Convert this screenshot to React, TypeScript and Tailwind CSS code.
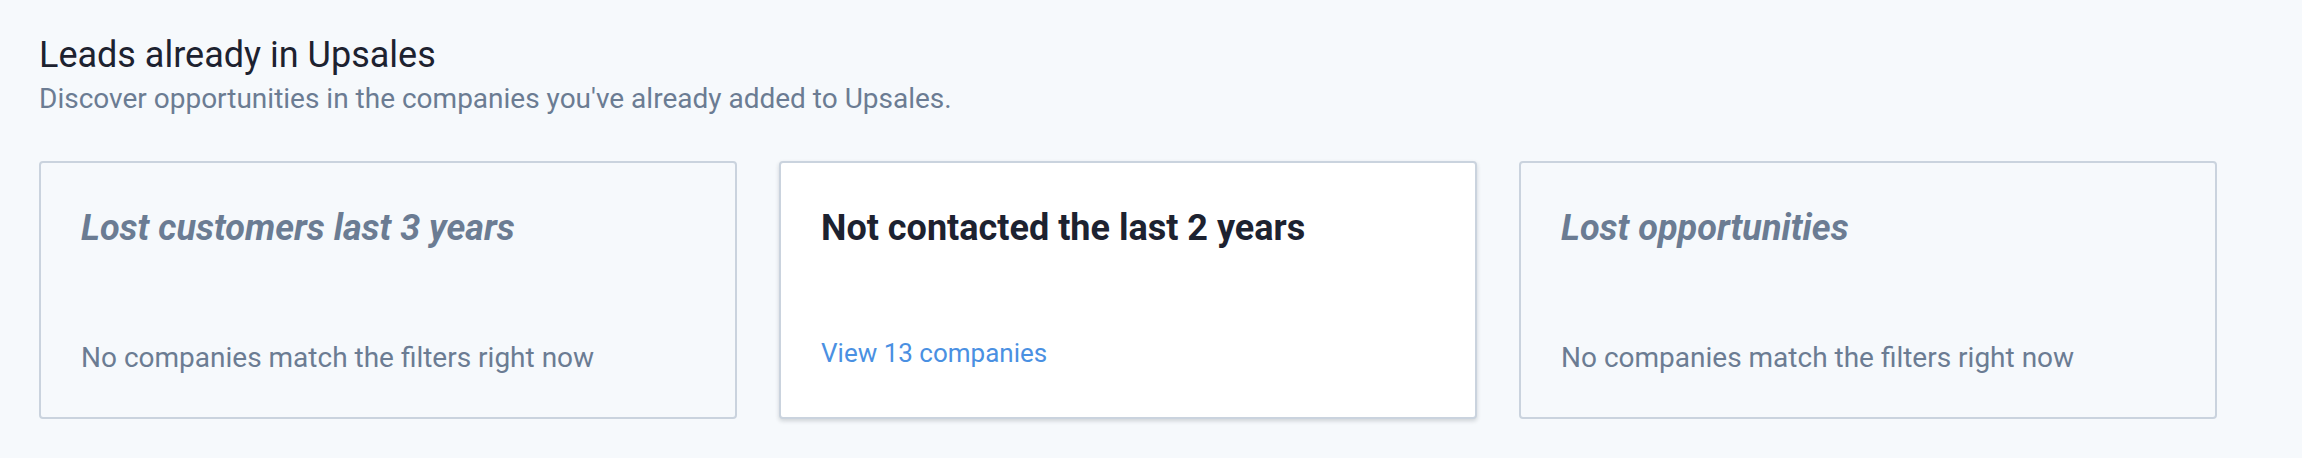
const cards = [
  { title: "Lost customers last 3 years", active: false, count: 0 },
  { title: "Not contacted the last 2 years", active: true, count: 13 },
  { title: "Lost opportunities", active: false, count: 0 },
];

function LeadCard({ title, active, count }: { title: string; active: boolean; count: number }) {
  return (
    <div
      className={`flex h-[258px] w-[698px] flex-col justify-between rounded-[4px] border-2 border-[#cad3de] px-10 pt-[43px] pb-[43px] ${
        active ? "bg-white shadow-[0_2px_4px_rgba(30,37,46,0.18)]" : "bg-[#f6f9fc]"
      }`}
    >
      <h3
        className={`text-[36px] leading-[44px] font-bold ${active ? "text-[#1d2230]" : "italic text-[#6b7c93]"}`}
      >
        {title}
      </h3>
      {active ? (
        <a href="#" className="mb-[5px] text-[26px] leading-[32px] text-[#4a90e2]">
          View {count} companies
        </a>
      ) : (
        <p className="text-[28px] leading-[32px] text-[#6b7c93]">No companies match the filters right now</p>
      )}
    </div>
  );
}

export default function App() {
  return (
    <div className="h-[458px] w-[2302px] bg-[#f6f9fc] pt-[33px] pl-[39px] font-['Roboto',sans-serif]">
      <h2 className="text-[36px] leading-[44px] text-[#1d2230]">Leads already in Upsales</h2>
      <p className="mt-[6px] text-[28px] leading-[32px] text-[#6b7c93]">
        Discover opportunities in the companies you've already added to Upsales.
      </p>
      <div className="mt-[46px] flex gap-[42px]">
        {cards.map((c) => (
          <LeadCard key={c.title} {...c} />
        ))}
      </div>
    </div>
  );
}
